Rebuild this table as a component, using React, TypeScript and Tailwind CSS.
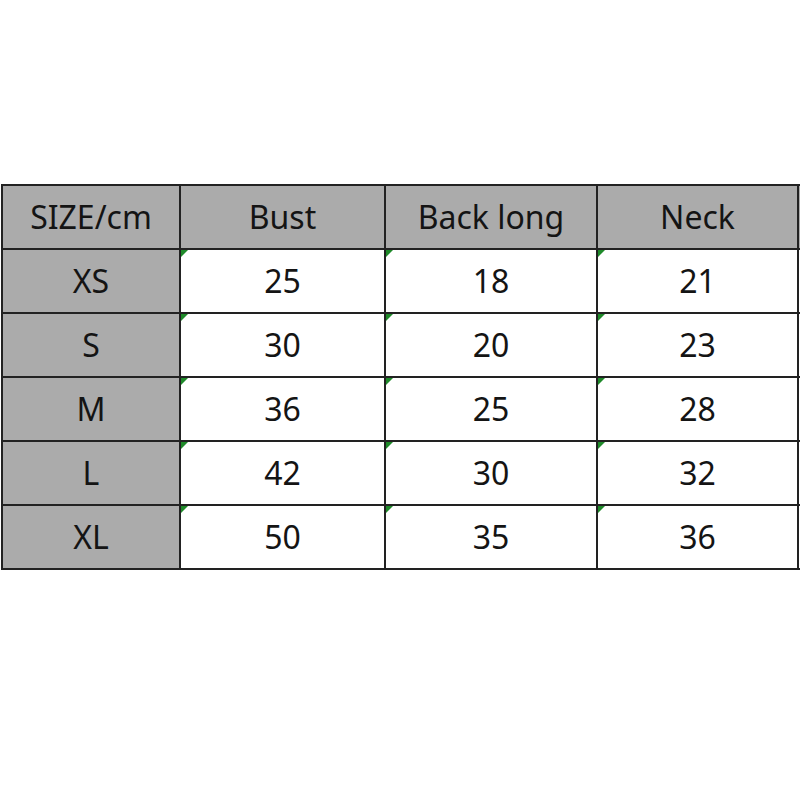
import React from "react"

const headers = ["SIZE/cm", "Bust", "Back long", "Neck"]

const rows: [string, string, string, string][] = [
  ["XS", "25", "18", "21"],
  ["S", "30", "20", "23"],
  ["M", "36", "25", "28"],
  ["L", "42", "30", "32"],
  ["XL", "50", "35", "36"],
]

// little green corner that Excel puts on numbers stored as text
function Flag() {
  return (
    <svg className="absolute left-0 top-0" width="7" height="7" viewBox="0 0 7 7">
      <path d="M0 0 L7 0 L0 7 Z" fill="#1f8a2a" />
    </svg>
  )
}

export default function App() {
  return (
    <div
      className="w-[800px] h-[800px] bg-white overflow-hidden pt-[184px] pl-[1px]"
      style={{ fontFamily: '"Noto Sans", "Open Sans", sans-serif' }}
    >
      <div className="grid grid-cols-[176px_203px_210px_199px_40px] auto-rows-[62px] gap-[2px] p-[2px] bg-[#222] w-[840px] text-[32px] text-[#141414]">
        {headers.map((h) => (
          <div key={h} className="bg-[#ababab] flex items-center justify-center">
            {h}
          </div>
        ))}
        <div className="bg-[#ababab]" />
        {rows.map((r) => (
          <React.Fragment key={r[0]}>
            <div className="bg-[#ababab] flex items-center justify-center">{r[0]}</div>
            {r.slice(1).map((v, i) => (
              <div key={i} className="relative bg-white flex items-center justify-center">
                <Flag />
                {v}
              </div>
            ))}
            <div className="bg-white" />
          </React.Fragment>
        ))}
      </div>
    </div>
  )
}
